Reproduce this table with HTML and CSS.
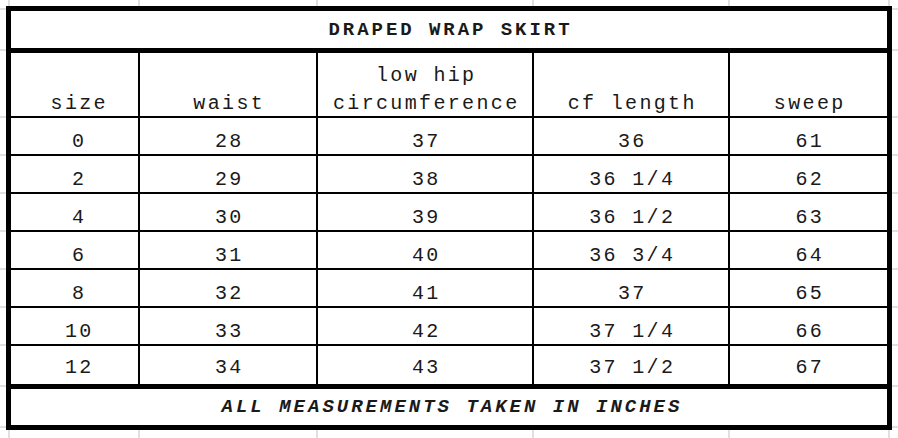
FILE: index.html
```html
<!DOCTYPE html>
<html lang="en">
<head>
<meta charset="utf-8">
<title>Draped Wrap Skirt</title>
<link rel="stylesheet" href="styles.css">
</head>
<body>
<div class="chart">
  <div class="title">DRAPED WRAP SKIRT</div>

  <div class="cell head c1"><span>size</span></div>
  <div class="cell head"><span>waist</span></div>
  <div class="cell head"><span>low hip<br>circumference</span></div>
  <div class="cell head"><span>cf length</span></div>
  <div class="cell head"><span>sweep</span></div>

  <div class="cell row c1">0</div><div class="cell row">28</div><div class="cell row">37</div><div class="cell row">36</div><div class="cell row">61</div>
  <div class="cell row c1">2</div><div class="cell row">29</div><div class="cell row">38</div><div class="cell row">36 1/4</div><div class="cell row">62</div>
  <div class="cell row c1">4</div><div class="cell row">30</div><div class="cell row">39</div><div class="cell row">36 1/2</div><div class="cell row">63</div>
  <div class="cell row c1">6</div><div class="cell row">31</div><div class="cell row">40</div><div class="cell row">36 3/4</div><div class="cell row">64</div>
  <div class="cell row c1">8</div><div class="cell row">32</div><div class="cell row">41</div><div class="cell row">37</div><div class="cell row">65</div>
  <div class="cell row c1">10</div><div class="cell row">33</div><div class="cell row">42</div><div class="cell row">37 1/4</div><div class="cell row">66</div>
  <div class="cell row last c1">12</div><div class="cell row last">34</div><div class="cell row last">43</div><div class="cell row last">37 1/2</div><div class="cell row last">67</div>

  <div class="footer">ALL MEASUREMENTS TAKEN IN INCHES</div>
</div>
</body>
</html>
```

FILE: styles.css
```css
html, body {
  margin: 0;
  padding: 0;
}

body {
  width: 898px;
  height: 438px;
  overflow: hidden;
  background-color: #fff;
  background-image:
    linear-gradient(#e0e0e0, #e0e0e0),
    linear-gradient(#e0e0e0, #e0e0e0),
    linear-gradient(#e0e0e0, #e0e0e0),
    linear-gradient(#e0e0e0, #e0e0e0),
    linear-gradient(#e0e0e0, #e0e0e0),
    linear-gradient(#e0e0e0, #e0e0e0),
    linear-gradient(#e0e0e0, #e0e0e0),
    linear-gradient(#e0e0e0, #e0e0e0),
    linear-gradient(#e0e0e0, #e0e0e0),
    linear-gradient(#e0e0e0, #e0e0e0),
    linear-gradient(#e0e0e0, #e0e0e0),
    linear-gradient(#e0e0e0, #e0e0e0),
    linear-gradient(#e0e0e0, #e0e0e0),
    linear-gradient(#e0e0e0, #e0e0e0),
    linear-gradient(#e0e0e0, #e0e0e0),
    linear-gradient(#e0e0e0, #e0e0e0),
    linear-gradient(#e0e0e0, #e0e0e0);
  background-repeat: no-repeat;
  background-size:
    2px 100%, 2px 100%, 2px 100%, 2px 100%, 2px 100%, 2px 100%,
    100% 2px, 100% 2px, 100% 2px, 100% 2px, 100% 2px, 100% 2px,
    100% 2px, 100% 2px, 100% 2px, 100% 2px, 100% 2px;
  background-position:
    8px 0, 138px 0, 316px 0, 532px 0, 728px 0, 888px 0,
    0 8px, 0 49px, 0 116px, 0 154px, 0 192px, 0 230px,
    0 268px, 0 306px, 0 344px, 0 385px, 0 426px;
  font-family: "Liberation Mono", "Courier New", monospace;
  color: #1a1a1a;
}

.chart {
  box-sizing: border-box;
  width: 886px;
  margin: 6px 0 0 6px;
  border: 5px solid #000;
  background: #fff;
  display: grid;
  grid-template-columns: 127px 178px 216px 196px 159px;
  grid-template-rows: 42px 63px repeat(6, 38px) 40px 41px;
}

.title,
.footer {
  grid-column: 1 / -1;
  display: flex;
  align-items: center;
  justify-content: center;
  font-size: 19px;
  font-weight: bold;
  letter-spacing: 2.95px;
  padding-left: 3px;
}

.title {
  border-bottom: 5px solid #000;
}

.footer {
  border-top: 5px solid #000;
  font-style: italic;
  letter-spacing: 3px;
  padding-left: 6px;
}

.cell {
  box-sizing: border-box;
  display: flex;
  align-items: flex-end;
  justify-content: center;
  text-align: center;
  font-size: 20px;
  line-height: 22px;
  letter-spacing: 2.35px;
  padding-left: 2.5px;
  border-left: 2px solid #000;
  white-space: nowrap;
}

.cell.c1 {
  border-left: none;
  padding-left: 9.5px;
}

.head {
  line-height: 28px;
}

.head span {
  margin-bottom: -2px;
}

.row {
  border-top: 2px solid #000;
  padding-bottom: 1px;
}

.row.last {
  padding-bottom: 5px;
}
```
